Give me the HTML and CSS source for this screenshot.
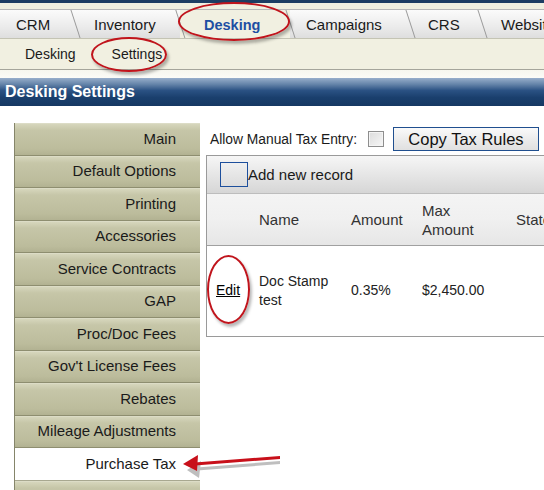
FILE: index.html
```html
<!DOCTYPE html>
<html>
<head>
<meta charset="utf-8">
<link rel="stylesheet" href="styles.css">
</head>
<body>
<div class="page">
  <div class="topbar"></div>
  <div class="nav">
    <div class="tabs">
      <div class="tab t-crm">CRM</div>
      <div class="tab t-inv">Inventory</div>
      <div class="tab t-desk active">Desking</div>
      <div class="tab t-camp">Campaigns</div>
      <div class="tab t-crs">CRS</div>
      <div class="tab t-web">Website</div>
    </div>
    <div class="subnav">
      <span class="sublink">Desking</span>
      <span class="sublink">Settings</span>
    </div>
  </div>
  <div class="spacer"></div>
  <div class="title">Desking Settings</div>
  <div class="main">
    <div class="sidebar">
      <div class="item">Main</div>
      <div class="item">Default Options</div>
      <div class="item">Printing</div>
      <div class="item">Accessories</div>
      <div class="item">Service Contracts</div>
      <div class="item">GAP</div>
      <div class="item">Proc/Doc Fees</div>
      <div class="item">Gov't License Fees</div>
      <div class="item">Rebates</div>
      <div class="item">Mileage Adjustments</div>
      <div class="item selected">Purchase Tax</div>
      <div class="item"></div>
    </div>
    <div class="content">
      <div class="options">
        <span class="opt-label">Allow Manual Tax Entry:</span>
        <span class="checkbox"></span>
        <span class="btn">Copy Tax Rules</span>
      </div>
      <div class="grid">
        <div class="toolbar">
          <span class="addbox"></span>
          <span class="addtext">Add new record</span>
        </div>
        <div class="row head">
          <div class="c c-edit"></div>
          <div class="c c-name">Name</div>
          <div class="c c-amt">Amount</div>
          <div class="c c-max">Max<br>Amount</div>
          <div class="c c-state">State</div>
        </div>
        <div class="row data">
          <div class="c c-edit"><a class="edit">Edit</a></div>
          <div class="c c-name">Doc Stamp<br>test</div>
          <div class="c c-amt">0.35%</div>
          <div class="c c-max">$2,450.00</div>
          <div class="c c-state"></div>
        </div>
      </div>
    </div>
  </div>

  <div class="oval oval-desk"></div>
  <div class="oval oval-set"></div>
  <div class="oval oval-edit"></div>
  <svg class="arrow" width="120" height="30" viewBox="0 0 120 30">
    <g fill="#8a8a8a" opacity="0.55">
      <path d="M100 11 L17 17.5 L17 20.5 L100 14 Z"/>
      <path d="M7 20 L21 11 L19 28 Z"/>
    </g>
    <g fill="#c8101a">
      <path d="M100 6 L15 12.5 L15 15.5 L100 9 Z"/>
      <path d="M3 14 L18 5 L17 21 Z"/>
    </g>
  </svg>
</div>
</body>
</html>
```

FILE: styles.css
```css
* { box-sizing: border-box; }
html, body { margin: 0; padding: 0; }
body {
  width: 544px;
  height: 490px;
  overflow: hidden;
  background: #fff;
  font-family: "Liberation Sans", Arial, sans-serif;
  color: #1a1a1a;
}
.page { position: relative; width: 544px; height: 490px; overflow: hidden; }

.topbar { height: 3px; background: #1d3d63; }

.nav { background: #f1f0e1; }
.tabs {
  display: flex;
  height: 36px;
  padding-top: 6px;
  border-bottom: 1px solid #c4c4b4;
  overflow: hidden;
  white-space: nowrap;
}
.tab {
  position: relative;
  flex: none;
  height: 30px;
  display: flex;
  align-items: center;
  font-size: 15px;
  color: #1a1a1a;
  background: linear-gradient(#fbfbfb, #ebebeb 60%, #dedede);
  border-top: 1px solid #b8b8b8;
  border-bottom: 1px solid #a8a8a8;
}
.tab::before {
  content: "";
  position: absolute;
  left: 0;
  top: 0;
  bottom: 0;
  width: 1px;
  background: #9a9a9a;
  transform: skewX(18deg);
}
.t-crm { width: 75px; padding-left: 16px; }
.t-crm::before { display: none; }
.t-inv { width: 105px; padding-left: 19px; }
.t-desk { width: 110px; padding-left: 24px; }
.t-camp { width: 120px; padding-left: 16px; }
.t-crs { width: 72px; padding-left: 18px; }
.t-web { width: 80px; padding-left: 19px; }
.tab.active {
  background: #f1f0e1;
  border-bottom-color: #f1f0e1;
  color: #1e4fa3;
  font-weight: bold;
  font-size: 14.5px;
  height: 31px;
  margin-bottom: -1px;
}

.subnav {
  height: 31px;
  display: flex;
  align-items: center;
  padding-left: 25px;
  gap: 36px;
  font-size: 14px;
  border-bottom: 1px solid #a5a59b;
}
.sublink { color: #1a1a1a; }

.spacer { height: 8px; background: linear-gradient(#f6f6ee, #fbfbf7); }

.title {
  height: 28px;
  padding-left: 5px;
  display: flex;
  align-items: center;
  color: #fff;
  font-weight: bold;
  font-size: 16px;
  background: linear-gradient(#97aecb 0%, #6685aa 22%, #2a5183 45%, #1a3f6d 70%, #163863 100%);
}

.main {
  display: flex;
  gap: 6px;
  padding: 17px 0 0 14px;
}
.sidebar {
  flex: none;
  width: 186px;
  border-left: 1px solid #85856a;
}
.item {
  height: 32.5px;
  padding-right: 24px;
  padding-bottom: 2px;
  display: flex;
  align-items: center;
  justify-content: flex-end;
  font-size: 15px;
  color: #1a1a1a;
  background: linear-gradient(#d6d6bc 0%, #c6c6a8 20%, #bcbc9c 80%, #b2b292 100%);
  border-bottom: 1px solid #8e8e70;
  border-top: 1px solid #dcdcc6;
}
.item.selected {
  background: #fff;
  border-top-color: #fff;
  border-bottom-color: #a8a890;
}

.content { flex: none; width: 420px; padding-top: 4px; }
.options {
  height: 24px;
  display: flex;
  align-items: center;
  padding-left: 4px;
}
.opt-label { font-size: 13.8px; color: #1a1a1a; }
.checkbox {
  width: 16px;
  height: 16px;
  margin-left: 11px;
  border: 1px solid #8e8e8e;
  background: linear-gradient(135deg, #dcdcdc, #f6f6f6);
  box-shadow: inset 0 0 0 1px #f4f4f4;
}
.btn {
  margin-left: 9px;
  height: 24px;
  width: 146px;
  flex: none;
  display: flex;
  align-items: center;
  justify-content: center;
  border: 1px solid #204f8f;
  background: linear-gradient(#fafafa, #ececec 50%, #e0e0e0);
  font-size: 16.5px;
  color: #111;
}

.grid {
  margin-top: 4px;
  border: 1px solid #9a9a9a;
  width: 420px;
  height: 182px;
}
.toolbar {
  height: 38px;
  display: flex;
  align-items: center;
  padding-left: 13px;
  background: linear-gradient(#f6f6f6, #e6e6e6 50%, #d6d6d6);
  border-bottom: 1px solid #bdbdbd;
}
.addbox {
  width: 28px;
  height: 25px;
  border: 1px solid #1d4f9c;
}
.addtext { font-size: 15px; color: #1a1a1a; }

.row { display: flex; }
.row.head {
  height: 52px;
  align-items: center;
  background: linear-gradient(#f4f4f4, #f0f0f0 50%, #e6e6e6);
  border-bottom: 1px solid #a0a0a0;
  font-size: 15px;
  color: #333;
  line-height: 19px;
}
.row.data {
  height: 89px;
  align-items: center;
  font-size: 14px;
  color: #222;
  line-height: 19px;
}
.c { flex: none; padding-left: 8px; }
.c-edit { width: 44px; padding-left: 9px; }
.c-name { width: 92px; }
.c-amt { width: 71px; }
.c-max { width: 94px; }
.c-state { width: 100px; }
.edit { color: #000; text-decoration: underline; font-size: 14px; }

.oval {
  position: absolute;
  border: 2px solid #c0141c;
  border-radius: 50%;
  box-shadow: 2px 3px 3px rgba(0, 0, 0, 0.28);
}
.oval-desk { left: 178px; top: 2px; width: 112px; height: 39px; }
.oval-set { left: 91px; top: 37px; width: 76px; height: 35px; }
.oval-edit { left: 207px; top: 255px; width: 43px; height: 69px; }
.arrow { position: absolute; left: 180px; top: 450px; }
```
